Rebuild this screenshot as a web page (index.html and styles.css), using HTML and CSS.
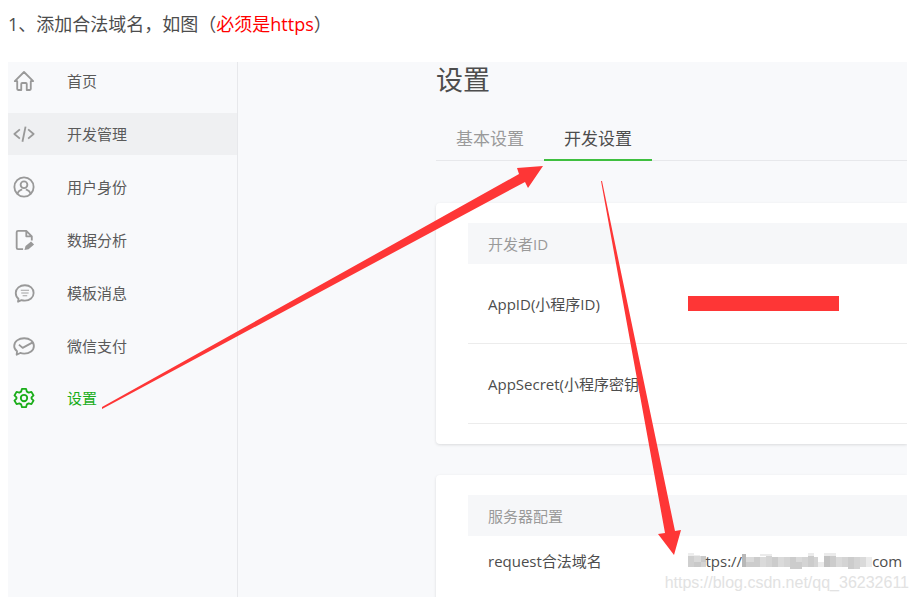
FILE: index.html
```html
<!DOCTYPE html>
<html lang="zh-CN">
<head>
  <meta charset="UTF-8">
  <meta name="viewport" content="width=device-width, initial-scale=1.0">
  <title>添加合法域名</title>
  <link rel="stylesheet" href="styles.css">
</head>
<body>
  <p class="step">1、添加合法域名，如图（<span class="step-warn">必须是https</span>）</p>

  <div class="console">
    <nav class="sidebar">
      <ul class="menu">
        <li>
          <a href="#" class="menu-item">
            <svg class="icon" viewBox="0 0 24 24"><path d="M4.6 12.2H2L12 2.2l10 10h-2.6v8.600q0 1-1 1H15v-6.600q0-1-1-1h-4q-1 0-1 1v6.600H5.600q-1 0-1-1z"/></svg>
            首页
          </a>
        </li>
        <li>
          <a href="#" class="menu-item active">
            <svg class="icon" viewBox="0 0 24 24"><path d="M7.500 7L1.500 12l6 5M16.500 7l6 5-6 5M13.700 4l-3.400 16.500"/></svg>
            开发管理
          </a>
        </li>
        <li>
          <a href="#" class="menu-item">
            <svg class="icon" viewBox="0 0 24 24"><circle cx="12" cy="12" r="10.500"/><circle cx="12" cy="9.500" r="3.700"/><path d="M5 19.500c.5-3 2.500-4.200 5-5M19 19.500c-.5-3-2.500-4.200-5-5"/></svg>
            用户身份
          </a>
        </li>
        <li>
          <a href="#" class="menu-item">
            <svg class="icon" viewBox="0 0 24 24"><path d="M11 22H5.500Q4 22 4 20.500V3.500Q4 2 5.500 2h9l6 6v4.500M14.500 2v6h6"/><path class="solid" d="M12.500 23l1.200-4.500 6-5 3.300 3.300-6 5.200z"/></svg>
            数据分析
          </a>
        </li>
        <li>
          <a href="#" class="menu-item">
            <svg class="icon" viewBox="0 0 24 24"><path d="M5.500 21.500l.5-3.200C3.800 16.700 3 14.300 3 12c0-5 4.500-8.500 10-8.500S22.500 7 22.500 12s-4.300 8.300-9.500 8.300c-1.500 0-2.700-.2-3.800-.6z"/><path class="thin" d="M8.500 9h9M9 12h8M10.500 15h5"/></svg>
            模板消息
          </a>
        </li>
        <li>
          <a href="#" class="menu-item">
            <svg class="icon" viewBox="0 0 24 24"><path d="M4 21.500l.4-3.700C2.300 16.200 1.300 14.200 1.300 12c0-5 4.900-8.500 10.900-8.500S22.800 7 22.800 12s-4.700 8.300-10.600 8.300c-1.500 0-3-.2-4.300-.7zM6.500 10.500l4 3.500 11-6"/></svg>
            微信支付
          </a>
        </li>
        <li>
          <a href="#" class="menu-item current">
            <svg class="icon" viewBox="0 0 24 24"><path d="M9.800 2h4.400l.9 3 2 1.100 3-.8 2.300 3.900-2.200 2.200v1.200l2.200 2.200-2.300 3.900-3-.8-2 1.100-.9 3H9.800l-.9-3-2-1.100-3 .8-2.300-3.900 2.200-2.200v-1.200L1.600 9.200l2.300-3.900 3 .8 2-1.100z"/><circle cx="12" cy="12" r="3.500"/></svg>
            设置
          </a>
        </li>
      </ul>
    </nav>

    <main class="content">
      <h1>设置</h1>
      <div class="tabs">
        <a href="#" class="tab">基本设置</a>
        <a href="#" class="tab selected">开发设置</a>
      </div>

      <section class="card">
        <table class="info">
          <thead>
            <tr><th colspan="2">开发者ID</th></tr>
          </thead>
          <tbody>
            <tr class="tall">
              <td class="label">AppID(小程序ID)</td>
              <td><div class="redacted"></div></td>
            </tr>
            <tr class="tall">
              <td class="label">AppSecret(小程序密钥)</td>
              <td></td>
            </tr>
          </tbody>
        </table>
      </section>

      <section class="card">
        <table class="info">
          <thead>
            <tr><th colspan="2">服务器配置</th></tr>
          </thead>
          <tbody>
            <tr>
              <td class="label">request合法域名</td>
              <td>
                <div class="domain">
                  <svg class="mosaic" width="18" height="16" viewBox="0 0 18 16">
                    <path fill="#ededed" d="M0 0h6v3H0zM6 2h6v1H6z"/>
                    <path fill="#cfcfcf" d="M0 3h6v11H0z"/>
                    <path fill="#d9d9d9" d="M6 3h7v6H6z"/>
                    <path fill="#c9c9c9" d="M6 9h7v5H6zM13 3h5v6h-5z"/>
                    <path fill="#d4d4d4" d="M13 9h5v5h-5z"/>
                  </svg>
                  <span>tps://</span>
                  <svg class="mosaic" width="130" height="16" viewBox="0 0 130 16">
                    <path fill="#b8b8b8" d="M0 1h4v13H0z"/>
                    <path fill="#dadada" d="M4 4h8v5H4zM18 4h6v10h-6zM36 4h6v10h-6zM54 4h6v5h-6zM94 4h6v10h-6zM118 4h6v10h-6z"/>
                    <path fill="#cccccc" d="M4 9h8v5H4zM12 4h6v10h-6zM30 4h6v10h-6zM48 4h6v12h-6zM54 9h6v7h-6zM66 3h6v11h-6zM88 3h6v11h-6zM106 4h6v12h-6z"/>
                    <path fill="#d4d4d4" d="M24 3h6v11h-6zM42 4h6v10h-6zM60 4h6v10h-6zM72 4h4v10h-4zM100 4h6v10h-6zM112 4h6v12h-6z"/>
                    <path fill="#c2c2c2" d="M82 3h6v11h-6z"/>
                    <path fill="#ebebeb" d="M76 9h6v5h-6zM124 4h6v10h-6zM18 1h12v2H18zM66 0h6v3h-6zM82 0h12v3H82z"/>
                  </svg>
                  <span>com</span>
                </div>
              </td>
            </tr>
          </tbody>
        </table>
      </section>
    </main>

    <!-- red arrows: menu item to tab, tab to domain row -->
    <svg class="arrows" width="899" height="535" viewBox="8 62 899 535">
      <polygon points="102,407 519,174 517,168 543,166 528,188 525,182 102,409"/>
      <polygon points="601,181 602,181 675,531 681,530 674,555 658,534 665,533"/>
    </svg>
  </div>

  <div class="watermark">https://blog.csdn.net/qq_36232611</div>
</body>
</html>
```

FILE: styles.css
```css
* {
  box-sizing: border-box;
}
body {
  display: flex;
  flex-direction: column;
  position: relative;
  height: 100vh;
  margin: 0;
  padding: 10px 11px 0 8px;
  overflow: hidden;
  background-color: white;
  color: #4d4d4d;
  font-family: "Open Sans", "Noto Sans CJK SC", sans-serif;
  font-size: 15px;
}
a {
  color: inherit;
  text-decoration: none;
}
.step {
  margin: 0 0 24px;
  font-size: 18px;
  line-height: 28px;
}
.step-warn {
  color: red;
}
.console {
  display: flex;
  flex: 1;
  position: relative;
  min-height: 0;
  overflow: hidden;
  background-color: #f8f9fb;
}
.sidebar {
  flex: 0 0 230px;
  border-right: 1px solid #e7e8eb;
}
.menu {
  display: flex;
  flex-direction: column;
  gap: 11px;
  margin: -2px 0 0;
  padding: 0;
  list-style: none;
}
.menu-item {
  display: flex;
  align-items: center;
  gap: 32px;
  height: 42px;
  padding-left: 5px;
  color: #5a5a5a;
  line-height: 20px;
}
.menu-item.active {
  background-color: #eff0f2;
}
.menu-item.current {
  padding-bottom: 2px;
  color: #1aad19;
}
.icon {
  width: 22px;
  height: 22px;
  fill: none;
  stroke: #999;
  stroke-width: 2;
  stroke-linejoin: round;
}
.icon .solid {
  fill: #999;
  stroke: none;
}
.icon .thin {
  stroke-width: 1;
}
.current .icon {
  stroke: #1aad19;
}
.content {
  flex: 1;
  min-width: 0;
  padding-left: 198px;
}
h1 {
  margin: 0;
  font-size: 27px;
  font-weight: normal;
  line-height: 36px;
}
.tabs {
  display: flex;
  margin: 20px 0 42px;
  border-bottom: 1px solid #e7e8eb;
}
.tab {
  margin-bottom: -1px;
  padding: 0 20px;
  border-bottom: 2px solid transparent;
  color: #9a9a9a;
  font-size: 17px;
  line-height: 41px;
}
.tab.selected {
  border-color: #3fbf3f;
  color: #4d4d4d;
}
.card {
  margin-bottom: 31px;
  padding: 20px 0 20px 32px;
  border-radius: 4px 0 0 4px;
  background-color: white;
  box-shadow: 0 1px 3px rgba(0, 0, 0, 0.12);
}
.info {
  width: 100%;
  border-collapse: separate;
  border-spacing: 0;
  table-layout: fixed;
}
.info th {
  height: 41px;
  padding: 0 20px;
  background-color: #f6f7f9;
  color: #9a9a9a;
  font-weight: normal;
  line-height: 20px;
  text-align: left;
}
.info td {
  height: 50px;
  padding: 0;
  line-height: 20px;
}
.info .tall td {
  height: 80px;
  border-bottom: 1px solid #ececec;
}
.info .label {
  width: 219px;
  padding-left: 20px;
}
.redacted {
  width: 151px;
  height: 15px;
  background-color: #fe3636;
}
.domain {
  display: flex;
  align-items: center;
  white-space: nowrap;
}
.mosaic {
  flex: none;
}
.arrows {
  position: absolute;
  top: 0;
  left: 0;
  fill: #fe3636;
  pointer-events: none;
}
.watermark {
  position: absolute;
  right: 9px;
  bottom: 4px;
  color: #e2e2e2;
  font-family: "Liberation Sans", sans-serif;
  font-size: 16px;
  line-height: 20px;
}
```
